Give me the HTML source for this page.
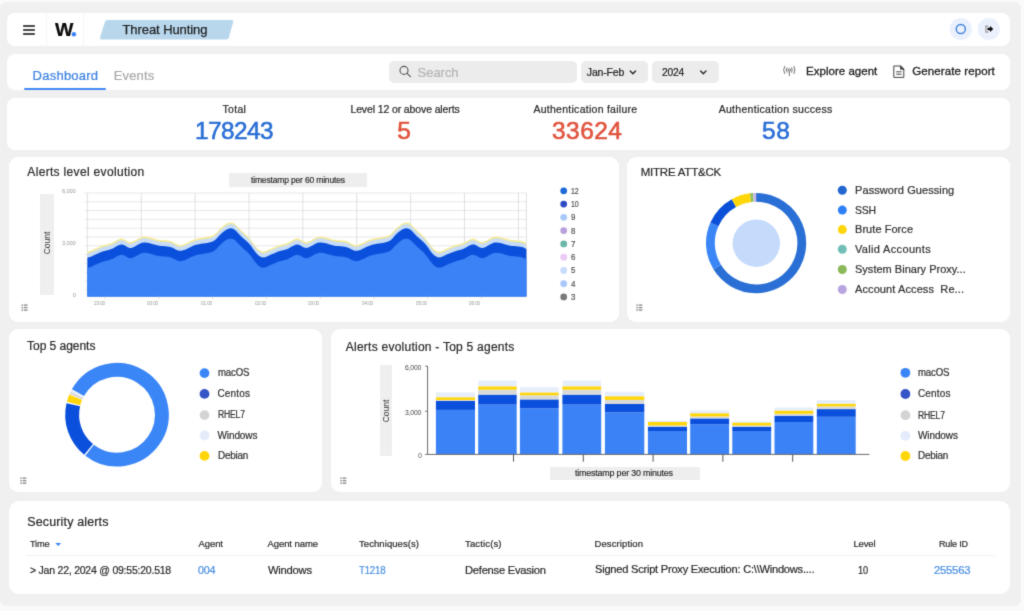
<!DOCTYPE html>
<html><head><meta charset="utf-8"><title>Threat Hunting</title>
<style>
html,body{margin:0;padding:0;}
body{width:1024px;height:611px;overflow:hidden;background:#fafafa;font-family:"Liberation Sans",sans-serif;position:relative;}
.t{position:absolute;white-space:nowrap;margin:0;padding:0;}
.b{position:absolute;}
svg{position:absolute;left:0;top:0;overflow:visible;}
#wrap{position:absolute;left:-12px;top:-12px;width:1048px;height:635px;background:#fafafa;filter:url(#soft);}
#page{position:absolute;left:12px;top:12px;width:1024px;height:611px;}
</style></head><body><svg width="0" height="0" style="position:absolute"><defs><filter id="soft" x="0" y="0" width="100%" height="100%" color-interpolation-filters="sRGB"><feConvolveMatrix order="3" kernelMatrix="0.0169 0.0962 0.0169 0.0962 0.5476 0.0962 0.0169 0.0962 0.0169" divisor="1" edgeMode="duplicate" preserveAlpha="true"/></filter></defs></svg><div id="wrap"><div id="page">
<div class="b" style="left:-0.50px;top:2.00px;width:1021.10px;height:603.80px;background:#f0f0f0;border-radius:6px;"></div>
<div class="b" style="left:6.80px;top:13.00px;width:1003.40px;height:33.20px;background:#fff;border-radius:8px;"></div>
<div class="b" style="left:6.80px;top:54.00px;width:1003.40px;height:35.80px;background:#fff;border-radius:8px;"></div>
<div class="b" style="left:6.80px;top:98.00px;width:1003.40px;height:51.60px;background:#fff;border-radius:8px;"></div>
<div class="b" style="left:8.50px;top:157.00px;width:610.10px;height:164.50px;background:#fff;border-radius:9px;"></div>
<div class="b" style="left:627.20px;top:157.00px;width:383.20px;height:164.50px;background:#fff;border-radius:9px;"></div>
<div class="b" style="left:8.50px;top:329.00px;width:313.90px;height:163.10px;background:#fff;border-radius:9px;"></div>
<div class="b" style="left:331.00px;top:329.00px;width:679.40px;height:163.10px;background:#fff;border-radius:9px;"></div>
<div class="b" style="left:8.50px;top:500.80px;width:1001.70px;height:93.50px;background:#fff;border-radius:10px;"></div>
<div class="b" style="left:22.60px;top:25.00px;width:12.30px;height:1.70px;background:#484848;border-radius:0.8px;"></div>
<div class="b" style="left:22.60px;top:29.00px;width:12.30px;height:1.70px;background:#484848;border-radius:0.8px;"></div>
<div class="b" style="left:22.60px;top:33.00px;width:12.30px;height:1.70px;background:#484848;border-radius:0.8px;"></div>
<div class="b" style="left:46.10px;top:13.00px;width:0.80px;height:33.20px;background:#f6f6f6;border-radius:0px;"></div>
<div class="b" style="left:83.00px;top:13.00px;width:0.80px;height:33.20px;background:#f6f6f6;border-radius:0px;"></div>
<div class="t" style="left:54.50px;top:21.29px;font-size:18.8px;line-height:18.8px;color:#0a0a0a;transform:scaleX(1.0370);transform-origin:0 0;font-weight:bold;-webkit-text-stroke:0.22px #0a0a0a;">W</div>
<svg width="1024" height="611" viewBox="0 0 1024 611"><circle cx="73.9" cy="34.3" r="2.2" fill="#3b82f6"/><path d="M107.6 20 L231.6 20 Q233.8 20 233.2 22 L228.8 37.7 Q228.3 39.5 226.3 39.5 L101.6 39.5 Q99.5 39.5 100.1 37.5 L104.9 21.8 Q105.5 20 107.6 20 Z" fill="#b8d7ed"/><circle cx="960.8" cy="29.0" r="11.1" fill="#eaf1fd"/><circle cx="960.8" cy="29.05" r="4.55" fill="none" stroke="#3f80de" stroke-width="1.4"/><circle cx="988.8" cy="29.0" r="11.1" fill="#eaf1fd"/><path d="M985.3 25.5 h3.0 v1.3 h-1.8 v4.6 h1.8 v1.3 h-3.0 Z" fill="#9a9a9a"/><path d="M987.5 27.7 h2.5 v-1.7 l3.3 3.0 l-3.3 3.0 v-1.7 h-2.5 Z" fill="#0a0a0a"/></svg>
<div class="t" style="left:122.50px;top:22.75px;font-size:13px;line-height:13px;color:#1f1f1f;letter-spacing:-0.076px;-webkit-text-stroke:0.25px #1f1f1f;">Threat Hunting</div>
<div class="t" style="left:32.60px;top:68.80px;font-size:13px;line-height:13px;color:#3d82e0;letter-spacing:0.238px;-webkit-text-stroke:0.22px #3d82e0;">Dashboard</div>
<div class="b" style="left:23.70px;top:88.00px;width:82.30px;height:2.30px;background:#4287f2;border-radius:1px;"></div>
<div class="t" style="left:113.75px;top:68.75px;font-size:13px;line-height:13px;color:#aaaaaa;letter-spacing:0.151px;-webkit-text-stroke:0.22px #aaaaaa;">Events</div>
<div class="b" style="left:389.20px;top:61.00px;width:188.00px;height:21.70px;background:#ececec;border-radius:5px;"></div>
<svg width="1024" height="611" viewBox="0 0 1024 611"><circle cx="404.0" cy="70.4" r="4.0" fill="none" stroke="#555" stroke-width="1.1"/><path d="M407.0 73.4 L410.5 76.6" stroke="#555" stroke-width="1.2" stroke-linecap="round"/></svg>
<div class="t" style="left:417.60px;top:66.00px;font-size:13px;line-height:13px;color:#b4b4b4;letter-spacing:-0.038px;-webkit-text-stroke:0.22px #b4b4b4;">Search</div>
<div class="b" style="left:581.00px;top:61.00px;width:67.30px;height:21.70px;background:#ececec;border-radius:5px;"></div>
<div class="t" style="left:586.80px;top:66.81px;font-size:10.5px;line-height:10.5px;color:#222;letter-spacing:-0.153px;-webkit-text-stroke:0.2px #222;">Jan-Feb</div>
<div class="b" style="left:651.70px;top:61.00px;width:67.30px;height:21.70px;background:#ececec;border-radius:5px;"></div>
<div class="t" style="left:662.00px;top:66.81px;font-size:10.5px;line-height:10.5px;color:#222;letter-spacing:-0.231px;transform:scaleX(0.9794);transform-origin:0 0;-webkit-text-stroke:0.2px #222;">2024</div>
<svg width="1024" height="611" viewBox="0 0 1024 611"><path d="M630.2 71.0 L632.9 73.7 L635.6 71.0" fill="none" stroke="#222" stroke-width="1.3" stroke-linecap="round" stroke-linejoin="round"/><path d="M700.6 71.0 L703.3 73.7 L706 71.0" fill="none" stroke="#222" stroke-width="1.3" stroke-linecap="round" stroke-linejoin="round"/><g fill="none" stroke="#707070" stroke-width="1.0" stroke-linecap="round"><circle cx="789.3" cy="70" r="1.2"/><path d="M789.3 71.4 V75.6"/><path d="M786.9 67.8 Q785.7 70 786.9 72.2"/><path d="M791.7 67.8 Q792.9 70 791.7 72.2"/><path d="M784.6 66.4 Q782.6 70 784.6 73.6"/><path d="M794 66.4 Q796 70 794 73.6"/></g><g fill="none" stroke="#444" stroke-width="1" stroke-linejoin="round" stroke-linecap="round"><path d="M894.2 66 H900.8 L903.8 69 V77.4 H894.2 Z"/><path d="M900.6 66.2 V69.2 H903.6 Z" fill="#444"/><path d="M896.6 71.8 H901.2 M896.6 74.2 H901.2"/></g></svg>
<div class="t" style="left:806.00px;top:65.67px;font-size:11.5px;line-height:11.5px;color:#222;letter-spacing:0.028px;-webkit-text-stroke:0.3px #222;">Explore agent</div>
<div class="t" style="left:912.30px;top:65.67px;font-size:11.5px;line-height:11.5px;color:#222;letter-spacing:0.094px;-webkit-text-stroke:0.3px #222;">Generate report</div>
<div class="t" style="left:222.50px;top:104.31px;font-size:10.5px;line-height:10.5px;color:#2b2b2b;letter-spacing:0.305px;-webkit-text-stroke:0.22px #2b2b2b;">Total</div>
<div class="t" style="left:195.25px;top:119.26px;font-size:24.5px;line-height:24.5px;color:#2b6fd6;letter-spacing:-0.539px;transform:scaleX(0.9929);transform-origin:0 0;-webkit-text-stroke:0.6px #2b6fd6;">178243</div>
<div class="t" style="left:350.45px;top:104.31px;font-size:10.5px;line-height:10.5px;color:#2b2b2b;letter-spacing:-0.121px;-webkit-text-stroke:0.22px #2b2b2b;">Level 12 or above alerts</div>
<div class="t" style="left:397.29px;top:119.26px;font-size:24.5px;line-height:24.5px;color:#e0543e;-webkit-text-stroke:0.6px #e0543e;">5</div>
<div class="t" style="left:533.45px;top:104.31px;font-size:10.5px;line-height:10.5px;color:#2b2b2b;letter-spacing:0.268px;-webkit-text-stroke:0.22px #2b2b2b;">Authentication failure</div>
<div class="t" style="left:552.00px;top:119.26px;font-size:24.5px;line-height:24.5px;color:#e0543e;letter-spacing:0.467px;-webkit-text-stroke:0.6px #e0543e;">33624</div>
<div class="t" style="left:718.70px;top:104.31px;font-size:10.5px;line-height:10.5px;color:#2b2b2b;letter-spacing:0.295px;-webkit-text-stroke:0.22px #2b2b2b;">Authentication success</div>
<div class="t" style="left:762.00px;top:119.26px;font-size:24.5px;line-height:24.5px;color:#2b6fd6;letter-spacing:0.748px;-webkit-text-stroke:0.6px #2b6fd6;">58</div>
<div class="t" style="left:27.30px;top:166.04px;font-size:12px;line-height:12px;color:#2b2b2b;letter-spacing:0.330px;-webkit-text-stroke:0.22px #2b2b2b;">Alerts level evolution</div>
<div class="t" style="left:640.70px;top:166.97px;font-size:11.5px;line-height:11.5px;color:#2b2b2b;letter-spacing:-0.214px;-webkit-text-stroke:0.22px #2b2b2b;">MITRE ATT&amp;CK</div>
<div class="t" style="left:27.10px;top:339.74px;font-size:12px;line-height:12px;color:#2b2b2b;letter-spacing:-0.038px;-webkit-text-stroke:0.22px #2b2b2b;">Top 5 agents</div>
<div class="t" style="left:345.80px;top:341.24px;font-size:12px;line-height:12px;color:#2b2b2b;letter-spacing:0.243px;-webkit-text-stroke:0.22px #2b2b2b;">Alerts evolution - Top 5 agents</div>
<div class="t" style="left:27.25px;top:515.52px;font-size:12.5px;line-height:12.5px;color:#2b2b2b;letter-spacing:0.143px;-webkit-text-stroke:0.22px #2b2b2b;">Security alerts</div>
<svg width="1024" height="611" viewBox="0 0 1024 611"><g fill="#8f8f8f"><rect x="21.50" y="304.40" width="1.5" height="1.4"/><rect x="23.80" y="304.40" width="3.7" height="1.4"/><rect x="21.50" y="306.90" width="1.5" height="1.4"/><rect x="23.80" y="306.90" width="3.7" height="1.4"/><rect x="21.50" y="309.40" width="1.5" height="1.4"/><rect x="23.80" y="309.40" width="3.7" height="1.4"/></g></svg>
<svg width="1024" height="611" viewBox="0 0 1024 611"><g fill="#8f8f8f"><rect x="636.30" y="304.40" width="1.5" height="1.4"/><rect x="638.60" y="304.40" width="3.7" height="1.4"/><rect x="636.30" y="306.90" width="1.5" height="1.4"/><rect x="638.60" y="306.90" width="3.7" height="1.4"/><rect x="636.30" y="309.40" width="1.5" height="1.4"/><rect x="638.60" y="309.40" width="3.7" height="1.4"/></g></svg>
<svg width="1024" height="611" viewBox="0 0 1024 611"><g fill="#8f8f8f"><rect x="20.30" y="477.50" width="1.5" height="1.4"/><rect x="22.60" y="477.50" width="3.7" height="1.4"/><rect x="20.30" y="480.00" width="1.5" height="1.4"/><rect x="22.60" y="480.00" width="3.7" height="1.4"/><rect x="20.30" y="482.50" width="1.5" height="1.4"/><rect x="22.60" y="482.50" width="3.7" height="1.4"/></g></svg>
<svg width="1024" height="611" viewBox="0 0 1024 611"><g fill="#8f8f8f"><rect x="340.30" y="477.50" width="1.5" height="1.4"/><rect x="342.60" y="477.50" width="3.7" height="1.4"/><rect x="340.30" y="480.00" width="1.5" height="1.4"/><rect x="342.60" y="480.00" width="3.7" height="1.4"/><rect x="340.30" y="482.50" width="1.5" height="1.4"/><rect x="342.60" y="482.50" width="3.7" height="1.4"/></g></svg>
<div class="b" style="left:40.20px;top:193.50px;width:13.80px;height:101.30px;background:#efefef;border-radius:0px;"></div>
<svg width="1024" height="611" viewBox="0 0 1024 611"><path d="M84.40 193.00 H526.40" stroke="#e9e4e4" stroke-width="0.9"/><path d="M84.40 201.80 H526.40" stroke="#e9e4e4" stroke-width="0.9"/><path d="M84.40 210.60 H526.40" stroke="#e9e4e4" stroke-width="0.9"/><path d="M84.40 219.40 H526.40" stroke="#e9e4e4" stroke-width="0.9"/><path d="M84.40 228.20 H526.40" stroke="#e9e4e4" stroke-width="0.9"/><path d="M84.40 237.00 H526.40" stroke="#e9e4e4" stroke-width="0.9"/><path d="M84.40 245.80 H526.40" stroke="#e9e4e4" stroke-width="0.9"/><path d="M84.40 254.60 H526.40" stroke="#e9e4e4" stroke-width="0.9"/><path d="M84.40 263.40 H526.40" stroke="#e9e4e4" stroke-width="0.9"/><path d="M84.40 272.20 H526.40" stroke="#e9e4e4" stroke-width="0.9"/><path d="M84.40 281.00 H526.40" stroke="#e9e4e4" stroke-width="0.9"/><path d="M84.40 289.80 H526.40" stroke="#e9e4e4" stroke-width="0.9"/><path d="M87.40 193.00 V296.60" stroke="#dbd9d9" stroke-width="0.8"/><path d="M141.27 193.00 V296.60" stroke="#dbd9d9" stroke-width="0.8"/><path d="M195.14 193.00 V296.60" stroke="#dbd9d9" stroke-width="0.8"/><path d="M249.01 193.00 V296.60" stroke="#dbd9d9" stroke-width="0.8"/><path d="M302.88 193.00 V296.60" stroke="#dbd9d9" stroke-width="0.8"/><path d="M356.75 193.00 V296.60" stroke="#dbd9d9" stroke-width="0.8"/><path d="M410.62 193.00 V296.60" stroke="#dbd9d9" stroke-width="0.8"/><path d="M464.49 193.00 V296.60" stroke="#dbd9d9" stroke-width="0.8"/><path d="M518.36 193.00 V296.60" stroke="#dbd9d9" stroke-width="0.8"/><path d="M526.40 193.00 V296.60" stroke="#dbd9d9" stroke-width="0.8"/><path d="M87.4 251.60 L89.4 251.30 L91.4 250.50 L93.4 249.49 L95.4 248.55 L97.4 247.73 L99.4 246.90 L101.4 246.08 L103.4 245.35 L105.4 244.75 L107.4 244.27 L109.4 243.78 L111.3 243.16 L113.3 242.24 L115.3 241.09 L117.3 239.92 L119.3 238.99 L121.3 238.51 L123.3 238.85 L125.3 239.91 L127.3 241.14 L129.3 242.00 L131.3 241.98 L133.3 241.34 L135.3 240.34 L137.3 239.18 L139.3 238.05 L141.3 237.13 L143.3 236.62 L145.3 236.57 L147.3 236.79 L149.3 237.21 L151.3 237.75 L153.2 238.35 L155.2 238.95 L157.2 239.45 L159.2 239.81 L161.2 240.04 L163.2 240.20 L165.2 240.34 L167.2 240.53 L169.2 240.83 L171.2 241.31 L173.2 242.19 L175.2 243.29 L177.2 244.30 L179.2 244.93 L181.2 244.92 L183.2 244.47 L185.2 243.76 L187.2 242.86 L189.2 241.87 L191.2 240.87 L193.2 239.96 L195.2 239.21 L197.2 238.66 L199.1 238.25 L201.1 237.93 L203.1 237.64 L205.1 237.36 L207.1 237.04 L209.1 236.62 L211.1 236.08 L213.1 235.36 L215.1 234.12 L217.1 232.04 L219.1 229.73 L221.1 227.76 L223.1 226.03 L225.1 224.50 L227.1 223.31 L229.1 222.63 L231.1 222.46 L233.1 222.80 L235.1 224.14 L237.1 226.16 L239.1 228.34 L241.1 230.28 L243.0 232.05 L245.0 233.79 L247.0 235.60 L249.0 237.59 L251.0 239.96 L253.0 242.74 L255.0 245.55 L257.0 248.00 L259.0 249.83 L261.0 251.06 L263.0 251.59 L265.0 251.35 L267.0 250.59 L269.0 249.59 L271.0 248.63 L273.0 247.82 L275.0 246.98 L277.0 246.16 L279.0 245.42 L281.0 244.81 L283.0 244.32 L285.0 243.84 L286.9 243.23 L288.9 242.35 L290.9 241.21 L292.9 240.03 L294.9 239.06 L296.9 238.53 L298.9 238.77 L300.9 239.78 L302.9 241.02 L304.9 241.94 L306.9 242.02 L308.9 241.42 L310.9 240.45 L312.9 239.30 L314.9 238.15 L316.9 237.21 L318.9 236.65 L320.9 236.56 L322.9 236.76 L324.9 237.16 L326.9 237.69 L328.9 238.29 L330.8 238.89 L332.8 239.41 L334.8 239.78 L336.8 240.02 L338.8 240.18 L340.8 240.33 L342.8 240.51 L344.8 240.79 L346.8 241.24 L348.8 242.09 L350.8 243.18 L352.8 244.21 L354.8 244.89 L356.8 244.95 L358.8 244.53 L360.8 243.84 L362.8 242.96 L364.8 241.97 L366.8 240.97 L368.8 240.04 L370.8 239.27 L372.8 238.71 L374.7 238.29 L376.7 237.96 L378.7 237.67 L380.7 237.39 L382.7 237.07 L384.7 236.67 L386.7 236.14 L388.7 235.44 L390.7 234.29 L392.7 232.27 L394.7 229.96 L396.7 227.94 L398.7 226.20 L400.7 224.64 L402.7 223.41 L404.7 222.67 L406.7 222.46 L408.7 222.73 L410.7 223.97 L412.7 225.94 L414.7 228.13 L416.6 230.10 L418.6 231.87 L420.6 233.61 L422.6 235.41 L424.6 237.38 L426.6 239.70 L428.6 242.45 L430.6 245.27 L432.6 247.78 L434.6 249.67 L436.6 250.97 L438.6 251.57 L440.6 251.41 L442.6 250.68 L444.6 249.69 L446.6 248.72 L448.6 247.90 L450.6 247.06 L452.6 246.24 L454.6 245.49 L456.6 244.86 L458.6 244.37 L460.5 243.89 L462.5 243.30 L464.5 242.45 L466.5 241.33 L468.5 240.15 L470.5 239.15 L472.5 238.56 L474.5 238.70 L476.5 239.66 L478.5 240.90 L480.5 241.88 L482.5 242.05 L484.5 241.50 L486.5 240.56 L488.5 239.42 L490.5 238.26 L492.5 237.29 L494.5 236.68 L496.5 236.56 L498.5 236.73 L500.5 237.11 L502.5 237.63 L504.5 238.23 L506.4 238.83 L508.4 239.36 L510.4 239.75 L512.4 240.00 L514.4 240.17 L516.4 240.31 L518.4 240.49 L520.4 240.76 L522.4 241.18 L524.4 241.99 L526.4 243.06 L526.4 296.60 L87.4 296.60 Z" fill="#f4ea95"/><path d="M87.4 253.30 L89.4 253.00 L91.4 252.20 L93.4 251.19 L95.4 250.25 L97.4 249.43 L99.4 248.60 L101.4 247.78 L103.4 247.05 L105.4 246.45 L107.4 245.97 L109.4 245.48 L111.3 244.86 L113.3 243.94 L115.3 242.79 L117.3 241.62 L119.3 240.69 L121.3 240.21 L123.3 240.55 L125.3 241.61 L127.3 242.84 L129.3 243.70 L131.3 243.68 L133.3 243.04 L135.3 242.04 L137.3 240.88 L139.3 239.75 L141.3 238.83 L143.3 238.32 L145.3 238.27 L147.3 238.49 L149.3 238.91 L151.3 239.45 L153.2 240.05 L155.2 240.65 L157.2 241.15 L159.2 241.51 L161.2 241.74 L163.2 241.90 L165.2 242.04 L167.2 242.23 L169.2 242.53 L171.2 243.01 L173.2 243.89 L175.2 244.99 L177.2 246.00 L179.2 246.63 L181.2 246.62 L183.2 246.17 L185.2 245.46 L187.2 244.56 L189.2 243.57 L191.2 242.57 L193.2 241.66 L195.2 240.91 L197.2 240.36 L199.1 239.95 L201.1 239.63 L203.1 239.34 L205.1 239.06 L207.1 238.74 L209.1 238.32 L211.1 237.78 L213.1 237.06 L215.1 235.82 L217.1 233.74 L219.1 231.43 L221.1 229.46 L223.1 227.73 L225.1 226.20 L227.1 225.01 L229.1 224.33 L231.1 224.16 L233.1 224.50 L235.1 225.84 L237.1 227.86 L239.1 230.04 L241.1 231.98 L243.0 233.75 L245.0 235.49 L247.0 237.30 L249.0 239.29 L251.0 241.66 L253.0 244.44 L255.0 247.25 L257.0 249.70 L259.0 251.53 L261.0 252.76 L263.0 253.29 L265.0 253.05 L267.0 252.29 L269.0 251.29 L271.0 250.33 L273.0 249.52 L275.0 248.68 L277.0 247.86 L279.0 247.12 L281.0 246.51 L283.0 246.02 L285.0 245.54 L286.9 244.93 L288.9 244.05 L290.9 242.91 L292.9 241.73 L294.9 240.76 L296.9 240.23 L298.9 240.47 L300.9 241.48 L302.9 242.72 L304.9 243.64 L306.9 243.72 L308.9 243.12 L310.9 242.15 L312.9 241.00 L314.9 239.85 L316.9 238.91 L318.9 238.35 L320.9 238.26 L322.9 238.46 L324.9 238.86 L326.9 239.39 L328.9 239.99 L330.8 240.59 L332.8 241.11 L334.8 241.48 L336.8 241.72 L338.8 241.88 L340.8 242.03 L342.8 242.21 L344.8 242.49 L346.8 242.94 L348.8 243.79 L350.8 244.88 L352.8 245.91 L354.8 246.59 L356.8 246.65 L358.8 246.23 L360.8 245.54 L362.8 244.66 L364.8 243.67 L366.8 242.67 L368.8 241.74 L370.8 240.97 L372.8 240.41 L374.7 239.99 L376.7 239.66 L378.7 239.37 L380.7 239.09 L382.7 238.77 L384.7 238.37 L386.7 237.84 L388.7 237.14 L390.7 235.99 L392.7 233.97 L394.7 231.66 L396.7 229.64 L398.7 227.90 L400.7 226.34 L402.7 225.11 L404.7 224.37 L406.7 224.16 L408.7 224.43 L410.7 225.67 L412.7 227.64 L414.7 229.83 L416.6 231.80 L418.6 233.57 L420.6 235.31 L422.6 237.11 L424.6 239.08 L426.6 241.40 L428.6 244.15 L430.6 246.97 L432.6 249.48 L434.6 251.37 L436.6 252.67 L438.6 253.27 L440.6 253.11 L442.6 252.38 L444.6 251.39 L446.6 250.42 L448.6 249.60 L450.6 248.76 L452.6 247.94 L454.6 247.19 L456.6 246.56 L458.6 246.07 L460.5 245.59 L462.5 245.00 L464.5 244.15 L466.5 243.03 L468.5 241.85 L470.5 240.85 L472.5 240.26 L474.5 240.40 L476.5 241.36 L478.5 242.60 L480.5 243.58 L482.5 243.75 L484.5 243.20 L486.5 242.26 L488.5 241.12 L490.5 239.96 L492.5 238.99 L494.5 238.38 L496.5 238.26 L498.5 238.43 L500.5 238.81 L502.5 239.33 L504.5 239.93 L506.4 240.53 L508.4 241.06 L510.4 241.45 L512.4 241.70 L514.4 241.87 L516.4 242.01 L518.4 242.19 L520.4 242.46 L522.4 242.88 L524.4 243.69 L526.4 244.76 L526.4 296.60 L87.4 296.60 Z" fill="#c7dcf6"/><path d="M87.4 257.50 L89.4 257.20 L91.4 256.40 L93.4 255.39 L95.4 254.45 L97.4 253.63 L99.4 252.80 L101.4 251.98 L103.4 251.25 L105.4 250.65 L107.4 250.17 L109.4 249.68 L111.3 249.06 L113.3 248.14 L115.3 246.99 L117.3 245.82 L119.3 244.89 L121.3 244.41 L123.3 244.75 L125.3 245.81 L127.3 247.04 L129.3 247.90 L131.3 247.88 L133.3 247.24 L135.3 246.24 L137.3 245.08 L139.3 243.95 L141.3 243.03 L143.3 242.52 L145.3 242.47 L147.3 242.69 L149.3 243.11 L151.3 243.65 L153.2 244.25 L155.2 244.85 L157.2 245.35 L159.2 245.71 L161.2 245.94 L163.2 246.10 L165.2 246.24 L167.2 246.43 L169.2 246.73 L171.2 247.21 L173.2 248.09 L175.2 249.19 L177.2 250.20 L179.2 250.83 L181.2 250.82 L183.2 250.37 L185.2 249.66 L187.2 248.76 L189.2 247.77 L191.2 246.77 L193.2 245.86 L195.2 245.11 L197.2 244.56 L199.1 244.15 L201.1 243.83 L203.1 243.54 L205.1 243.26 L207.1 242.94 L209.1 242.52 L211.1 241.98 L213.1 241.26 L215.1 240.02 L217.1 237.94 L219.1 235.63 L221.1 233.66 L223.1 231.93 L225.1 230.40 L227.1 229.21 L229.1 228.53 L231.1 228.36 L233.1 228.70 L235.1 230.04 L237.1 232.06 L239.1 234.24 L241.1 236.18 L243.0 237.95 L245.0 239.69 L247.0 241.50 L249.0 243.49 L251.0 245.86 L253.0 248.64 L255.0 251.45 L257.0 253.90 L259.0 255.73 L261.0 256.96 L263.0 257.49 L265.0 257.25 L267.0 256.49 L269.0 255.49 L271.0 254.53 L273.0 253.72 L275.0 252.88 L277.0 252.06 L279.0 251.32 L281.0 250.71 L283.0 250.22 L285.0 249.74 L286.9 249.13 L288.9 248.25 L290.9 247.11 L292.9 245.93 L294.9 244.96 L296.9 244.43 L298.9 244.67 L300.9 245.68 L302.9 246.92 L304.9 247.84 L306.9 247.92 L308.9 247.32 L310.9 246.35 L312.9 245.20 L314.9 244.05 L316.9 243.11 L318.9 242.55 L320.9 242.46 L322.9 242.66 L324.9 243.06 L326.9 243.59 L328.9 244.19 L330.8 244.79 L332.8 245.31 L334.8 245.68 L336.8 245.92 L338.8 246.08 L340.8 246.23 L342.8 246.41 L344.8 246.69 L346.8 247.14 L348.8 247.99 L350.8 249.08 L352.8 250.11 L354.8 250.79 L356.8 250.85 L358.8 250.43 L360.8 249.74 L362.8 248.86 L364.8 247.87 L366.8 246.87 L368.8 245.94 L370.8 245.17 L372.8 244.61 L374.7 244.19 L376.7 243.86 L378.7 243.57 L380.7 243.29 L382.7 242.97 L384.7 242.57 L386.7 242.04 L388.7 241.34 L390.7 240.19 L392.7 238.17 L394.7 235.86 L396.7 233.84 L398.7 232.10 L400.7 230.54 L402.7 229.31 L404.7 228.57 L406.7 228.36 L408.7 228.63 L410.7 229.87 L412.7 231.84 L414.7 234.03 L416.6 236.00 L418.6 237.77 L420.6 239.51 L422.6 241.31 L424.6 243.28 L426.6 245.60 L428.6 248.35 L430.6 251.17 L432.6 253.68 L434.6 255.57 L436.6 256.87 L438.6 257.47 L440.6 257.31 L442.6 256.58 L444.6 255.59 L446.6 254.62 L448.6 253.80 L450.6 252.96 L452.6 252.14 L454.6 251.39 L456.6 250.76 L458.6 250.27 L460.5 249.79 L462.5 249.20 L464.5 248.35 L466.5 247.23 L468.5 246.05 L470.5 245.05 L472.5 244.46 L474.5 244.60 L476.5 245.56 L478.5 246.80 L480.5 247.78 L482.5 247.95 L484.5 247.40 L486.5 246.46 L488.5 245.32 L490.5 244.16 L492.5 243.19 L494.5 242.58 L496.5 242.46 L498.5 242.63 L500.5 243.01 L502.5 243.53 L504.5 244.13 L506.4 244.73 L508.4 245.26 L510.4 245.65 L512.4 245.90 L514.4 246.07 L516.4 246.21 L518.4 246.39 L520.4 246.66 L522.4 247.08 L524.4 247.89 L526.4 248.96 L526.4 296.60 L87.4 296.60 Z" fill="#0a50dc"/><path d="M87.4 267.80 L89.4 267.50 L91.4 266.70 L93.4 265.69 L95.4 264.75 L97.4 263.93 L99.4 263.10 L101.4 262.28 L103.4 261.55 L105.4 260.95 L107.4 260.47 L109.4 259.98 L111.3 259.36 L113.3 258.44 L115.3 257.29 L117.3 256.12 L119.3 255.19 L121.3 254.71 L123.3 255.05 L125.3 256.11 L127.3 257.34 L129.3 258.20 L131.3 258.18 L133.3 257.54 L135.3 256.54 L137.3 255.38 L139.3 254.25 L141.3 253.33 L143.3 252.82 L145.3 252.77 L147.3 252.99 L149.3 253.41 L151.3 253.95 L153.2 254.55 L155.2 255.15 L157.2 255.65 L159.2 256.01 L161.2 256.24 L163.2 256.40 L165.2 256.54 L167.2 256.73 L169.2 257.03 L171.2 257.51 L173.2 258.39 L175.2 259.49 L177.2 260.50 L179.2 261.13 L181.2 261.12 L183.2 260.67 L185.2 259.96 L187.2 259.06 L189.2 258.07 L191.2 257.07 L193.2 256.16 L195.2 255.41 L197.2 254.86 L199.1 254.45 L201.1 254.13 L203.1 253.84 L205.1 253.56 L207.1 253.24 L209.1 252.82 L211.1 252.28 L213.1 251.56 L215.1 250.32 L217.1 248.24 L219.1 245.93 L221.1 243.96 L223.1 242.23 L225.1 240.70 L227.1 239.51 L229.1 238.83 L231.1 238.66 L233.1 239.00 L235.1 240.34 L237.1 242.36 L239.1 244.54 L241.1 246.48 L243.0 248.25 L245.0 249.99 L247.0 251.80 L249.0 253.79 L251.0 256.16 L253.0 258.94 L255.0 261.75 L257.0 264.20 L259.0 266.03 L261.0 267.26 L263.0 267.79 L265.0 267.55 L267.0 266.79 L269.0 265.79 L271.0 264.83 L273.0 264.02 L275.0 263.18 L277.0 262.36 L279.0 261.62 L281.0 261.01 L283.0 260.52 L285.0 260.04 L286.9 259.43 L288.9 258.55 L290.9 257.41 L292.9 256.23 L294.9 255.26 L296.9 254.73 L298.9 254.97 L300.9 255.98 L302.9 257.22 L304.9 258.14 L306.9 258.22 L308.9 257.62 L310.9 256.65 L312.9 255.50 L314.9 254.35 L316.9 253.41 L318.9 252.85 L320.9 252.76 L322.9 252.96 L324.9 253.36 L326.9 253.89 L328.9 254.49 L330.8 255.09 L332.8 255.61 L334.8 255.98 L336.8 256.22 L338.8 256.38 L340.8 256.53 L342.8 256.71 L344.8 256.99 L346.8 257.44 L348.8 258.29 L350.8 259.38 L352.8 260.41 L354.8 261.09 L356.8 261.15 L358.8 260.73 L360.8 260.04 L362.8 259.16 L364.8 258.17 L366.8 257.17 L368.8 256.24 L370.8 255.47 L372.8 254.91 L374.7 254.49 L376.7 254.16 L378.7 253.87 L380.7 253.59 L382.7 253.27 L384.7 252.87 L386.7 252.34 L388.7 251.64 L390.7 250.49 L392.7 248.47 L394.7 246.16 L396.7 244.14 L398.7 242.40 L400.7 240.84 L402.7 239.61 L404.7 238.87 L406.7 238.66 L408.7 238.93 L410.7 240.17 L412.7 242.14 L414.7 244.33 L416.6 246.30 L418.6 248.07 L420.6 249.81 L422.6 251.61 L424.6 253.58 L426.6 255.90 L428.6 258.65 L430.6 261.47 L432.6 263.98 L434.6 265.87 L436.6 267.17 L438.6 267.77 L440.6 267.61 L442.6 266.88 L444.6 265.89 L446.6 264.92 L448.6 264.10 L450.6 263.26 L452.6 262.44 L454.6 261.69 L456.6 261.06 L458.6 260.57 L460.5 260.09 L462.5 259.50 L464.5 258.65 L466.5 257.53 L468.5 256.35 L470.5 255.35 L472.5 254.76 L474.5 254.90 L476.5 255.86 L478.5 257.10 L480.5 258.08 L482.5 258.25 L484.5 257.70 L486.5 256.76 L488.5 255.62 L490.5 254.46 L492.5 253.49 L494.5 252.88 L496.5 252.76 L498.5 252.93 L500.5 253.31 L502.5 253.83 L504.5 254.43 L506.4 255.03 L508.4 255.56 L510.4 255.95 L512.4 256.20 L514.4 256.37 L516.4 256.51 L518.4 256.69 L520.4 256.96 L522.4 257.38 L524.4 258.19 L526.4 259.26 L526.4 296.60 L87.4 296.60 Z" fill="#3b82f6"/><path d="M105.10 296.60 V298.80" stroke="#ccc" stroke-width="0.8"/><path d="M158.87 296.60 V298.80" stroke="#ccc" stroke-width="0.8"/><path d="M212.64 296.60 V298.80" stroke="#ccc" stroke-width="0.8"/><path d="M266.41 296.60 V298.80" stroke="#ccc" stroke-width="0.8"/><path d="M320.18 296.60 V298.80" stroke="#ccc" stroke-width="0.8"/><path d="M373.95 296.60 V298.80" stroke="#ccc" stroke-width="0.8"/><path d="M427.72 296.60 V298.80" stroke="#ccc" stroke-width="0.8"/><path d="M481.49 296.60 V298.80" stroke="#ccc" stroke-width="0.8"/></svg>
<div class="t" style="left:93.70px;top:300.99px;font-size:5.8px;line-height:5.8px;color:#9a9a9a;letter-spacing:-0.128px;transform:scaleX(0.7998);transform-origin:0 0;">23:00</div>
<div class="t" style="left:147.37px;top:300.99px;font-size:5.8px;line-height:5.8px;color:#9a9a9a;letter-spacing:-0.128px;transform:scaleX(0.7998);transform-origin:0 0;">00:00</div>
<div class="t" style="left:201.04px;top:300.99px;font-size:5.8px;line-height:5.8px;color:#9a9a9a;letter-spacing:-0.128px;transform:scaleX(0.7998);transform-origin:0 0;">01:00</div>
<div class="t" style="left:254.71px;top:300.99px;font-size:5.8px;line-height:5.8px;color:#9a9a9a;letter-spacing:-0.128px;transform:scaleX(0.7998);transform-origin:0 0;">02:00</div>
<div class="t" style="left:308.38px;top:300.99px;font-size:5.8px;line-height:5.8px;color:#9a9a9a;letter-spacing:-0.128px;transform:scaleX(0.7998);transform-origin:0 0;">03:00</div>
<div class="t" style="left:362.05px;top:300.99px;font-size:5.8px;line-height:5.8px;color:#9a9a9a;letter-spacing:-0.128px;transform:scaleX(0.7998);transform-origin:0 0;">04:00</div>
<div class="t" style="left:415.72px;top:300.99px;font-size:5.8px;line-height:5.8px;color:#9a9a9a;letter-spacing:-0.128px;transform:scaleX(0.7998);transform-origin:0 0;">05:00</div>
<div class="t" style="left:469.39px;top:300.99px;font-size:5.8px;line-height:5.8px;color:#9a9a9a;letter-spacing:-0.128px;transform:scaleX(0.7998);transform-origin:0 0;">06:00</div>
<div class="t" style="left:62.10px;top:189.09px;font-size:5.8px;line-height:5.8px;color:#9a9a9a;letter-spacing:-0.128px;transform:scaleX(0.9854);transform-origin:0 0;">6,000</div>
<div class="t" style="left:62.10px;top:241.09px;font-size:5.8px;line-height:5.8px;color:#9a9a9a;letter-spacing:-0.128px;transform:scaleX(0.9854);transform-origin:0 0;">3,000</div>
<div class="t" style="left:72.69px;top:293.39px;font-size:5.8px;line-height:5.8px;color:#9a9a9a;">0</div>
<div class="t" style="left:47.1px;top:243.2px;font-size:8.5px;line-height:8.5px;color:#333;transform:translate(-50%,-50%) rotate(-90deg);">Count</div>
<div class="b" style="left:229.10px;top:173.10px;width:137.80px;height:14.20px;background:#eeeeee;border-radius:0px;"></div>
<div class="t" style="left:250.50px;top:175.78px;font-size:9px;line-height:9px;color:#333;letter-spacing:-0.198px;transform:scaleX(0.9496);transform-origin:0 0;-webkit-text-stroke:0.22px #333;">timestamp per 60 minutes</div>
<div class="t" style="left:570.70px;top:186.78px;font-size:9px;line-height:9px;color:#555;letter-spacing:-0.198px;transform:scaleX(0.7847);transform-origin:0 0;-webkit-text-stroke:0.22px #555;">12</div>
<div class="t" style="left:570.70px;top:200.05px;font-size:9px;line-height:9px;color:#555;letter-spacing:-0.198px;transform:scaleX(0.7847);transform-origin:0 0;-webkit-text-stroke:0.22px #555;">10</div>
<div class="t" style="left:570.70px;top:213.32px;font-size:9px;line-height:9px;color:#555;transform:scaleX(0.8790);transform-origin:0 0;-webkit-text-stroke:0.22px #555;">9</div>
<div class="t" style="left:570.70px;top:226.59px;font-size:9px;line-height:9px;color:#555;transform:scaleX(0.8790);transform-origin:0 0;-webkit-text-stroke:0.22px #555;">8</div>
<div class="t" style="left:570.70px;top:239.86px;font-size:9px;line-height:9px;color:#555;transform:scaleX(0.8790);transform-origin:0 0;-webkit-text-stroke:0.22px #555;">7</div>
<div class="t" style="left:570.70px;top:253.13px;font-size:9px;line-height:9px;color:#555;transform:scaleX(0.8790);transform-origin:0 0;-webkit-text-stroke:0.22px #555;">6</div>
<div class="t" style="left:570.70px;top:266.40px;font-size:9px;line-height:9px;color:#555;transform:scaleX(0.8790);transform-origin:0 0;-webkit-text-stroke:0.22px #555;">5</div>
<div class="t" style="left:570.70px;top:279.67px;font-size:9px;line-height:9px;color:#555;transform:scaleX(0.8790);transform-origin:0 0;-webkit-text-stroke:0.22px #555;">4</div>
<div class="t" style="left:570.70px;top:292.94px;font-size:9px;line-height:9px;color:#555;transform:scaleX(0.8790);transform-origin:0 0;-webkit-text-stroke:0.22px #555;">3</div>
<svg width="1024" height="611" viewBox="0 0 1024 611"><circle cx="563.7" cy="190.80" r="3.4" fill="#1f6ad6"/><circle cx="563.7" cy="204.07" r="3.4" fill="#2c4cc4"/><circle cx="563.7" cy="217.34" r="3.4" fill="#a9c9fb"/><circle cx="563.7" cy="230.61" r="3.4" fill="#b7a0dc"/><circle cx="563.7" cy="243.88" r="3.4" fill="#6bb5a9"/><circle cx="563.7" cy="257.15" r="3.4" fill="#ecc9f6"/><circle cx="563.7" cy="270.42" r="3.4" fill="#c6dcfb"/><circle cx="563.7" cy="283.69" r="3.4" fill="#a9c9fb"/><circle cx="563.7" cy="296.96" r="3.4" fill="#7a7a7a"/></svg>
<div class="t" style="left:855.00px;top:184.89px;font-size:11px;line-height:11px;color:#333;letter-spacing:0.086px;-webkit-text-stroke:0.22px #333;white-space:pre;">Password Guessing</div>
<div class="t" style="left:855.00px;top:204.69px;font-size:11px;line-height:11px;color:#333;letter-spacing:-0.242px;transform:scaleX(0.9487);transform-origin:0 0;-webkit-text-stroke:0.22px #333;white-space:pre;">SSH</div>
<div class="t" style="left:855.00px;top:224.19px;font-size:11px;line-height:11px;color:#333;letter-spacing:0.053px;-webkit-text-stroke:0.22px #333;white-space:pre;">Brute Force</div>
<div class="t" style="left:855.00px;top:243.79px;font-size:11px;line-height:11px;color:#333;letter-spacing:0.335px;-webkit-text-stroke:0.22px #333;white-space:pre;">Valid Accounts</div>
<div class="t" style="left:855.00px;top:264.09px;font-size:11px;line-height:11px;color:#333;letter-spacing:0.013px;-webkit-text-stroke:0.22px #333;white-space:pre;">System Binary Proxy...</div>
<div class="t" style="left:855.00px;top:284.09px;font-size:11px;line-height:11px;color:#333;letter-spacing:0.100px;-webkit-text-stroke:0.22px #333;white-space:pre;">Account Access  Re...</div>
<svg width="1024" height="611" viewBox="0 0 1024 611"><path d="M756.10 197.40 A45.7 45.7 0 1 1 717.18 267.05" fill="none" stroke="#2a6fd5" stroke-width="8.8"/><path d="M717.18 267.05 A45.7 45.7 0 0 1 714.42 224.37" fill="none" stroke="#3b86f7" stroke-width="8.8"/><path d="M714.42 224.37 A45.7 45.7 0 0 1 733.94 203.13" fill="none" stroke="#0b50d8" stroke-width="8.8"/><path d="M733.94 203.13 A45.7 45.7 0 0 1 750.53 197.74" fill="none" stroke="#ffd60a" stroke-width="8.8"/><path d="M750.53 197.74 A45.7 45.7 0 0 1 753.39 197.48" fill="none" stroke="#8fbf5a" stroke-width="8.8"/><path d="M753.39 197.48 A45.7 45.7 0 0 1 756.10 197.40" fill="none" stroke="#c9b8ea" stroke-width="8.8"/><circle cx="756.3000000000001" cy="243.2" r="23.7" fill="#c4dbfc"/><circle cx="842.3" cy="190.30" r="4.5" fill="#2266d0"/><circle cx="842.3" cy="210.10" r="4.5" fill="#2f80f7"/><circle cx="842.3" cy="229.60" r="4.5" fill="#ffd60a"/><circle cx="842.3" cy="249.20" r="4.5" fill="#73bfb8"/><circle cx="842.3" cy="269.50" r="4.5" fill="#8ab85a"/><circle cx="842.3" cy="289.50" r="4.5" fill="#b8a4e0"/></svg>
<div class="t" style="left:217.50px;top:368.44px;font-size:10px;line-height:10px;color:#333;letter-spacing:-0.220px;transform:scaleX(0.9673);transform-origin:0 0;-webkit-text-stroke:0.22px #333;">macOS</div>
<div class="t" style="left:217.50px;top:389.24px;font-size:10px;line-height:10px;color:#333;letter-spacing:0.143px;-webkit-text-stroke:0.22px #333;">Centos</div>
<div class="t" style="left:217.50px;top:410.44px;font-size:10px;line-height:10px;color:#333;letter-spacing:-0.220px;transform:scaleX(0.8610);transform-origin:0 0;-webkit-text-stroke:0.22px #333;">RHEL7</div>
<div class="t" style="left:217.50px;top:430.84px;font-size:10px;line-height:10px;color:#333;letter-spacing:-0.111px;-webkit-text-stroke:0.22px #333;">Windows</div>
<div class="t" style="left:217.50px;top:451.24px;font-size:10px;line-height:10px;color:#333;letter-spacing:-0.220px;transform:scaleX(0.9938);transform-origin:0 0;-webkit-text-stroke:0.22px #333;">Debian</div>
<div class="t" style="left:918.00px;top:368.14px;font-size:10px;line-height:10px;color:#333;letter-spacing:-0.220px;transform:scaleX(0.9673);transform-origin:0 0;-webkit-text-stroke:0.22px #333;">macOS</div>
<div class="t" style="left:918.00px;top:389.34px;font-size:10px;line-height:10px;color:#333;letter-spacing:0.143px;-webkit-text-stroke:0.22px #333;">Centos</div>
<div class="t" style="left:918.00px;top:410.54px;font-size:10px;line-height:10px;color:#333;letter-spacing:-0.220px;transform:scaleX(0.8610);transform-origin:0 0;-webkit-text-stroke:0.22px #333;">RHEL7</div>
<div class="t" style="left:918.00px;top:431.14px;font-size:10px;line-height:10px;color:#333;letter-spacing:-0.111px;-webkit-text-stroke:0.22px #333;">Windows</div>
<div class="t" style="left:918.00px;top:451.34px;font-size:10px;line-height:10px;color:#333;letter-spacing:-0.220px;transform:scaleX(0.9938);transform-origin:0 0;-webkit-text-stroke:0.22px #333;">Debian</div>
<svg width="1024" height="611" viewBox="0 0 1024 611"><path d="M77.93 392.68 A44.849999999999994 44.849999999999994 0 1 1 89.57 450.19" fill="none" stroke="#3b86f7" stroke-width="13.9"/><path d="M88.59 449.41 A44.849999999999994 44.849999999999994 0 0 1 73.28 404.69" fill="none" stroke="#0a50dc" stroke-width="13.9"/><path d="M73.60 403.39 A44.849999999999994 44.849999999999994 0 0 1 75.68 397.25" fill="none" stroke="#ffd60a" stroke-width="13.9"/><path d="M75.96 396.60 A44.849999999999994 44.849999999999994 0 0 1 76.76 394.90" fill="none" stroke="#d4d4d4" stroke-width="13.9"/><path d="M76.83 394.76 A44.849999999999994 44.849999999999994 0 0 1 77.55 393.37" fill="none" stroke="#e4ecfb" stroke-width="13.9"/><circle cx="204.5" cy="373.10" r="4.9" fill="#3a86f8"/><circle cx="204.5" cy="393.90" r="4.9" fill="#3554c6"/><circle cx="204.5" cy="415.10" r="4.9" fill="#d4d4d4"/><circle cx="204.5" cy="435.50" r="4.9" fill="#e4ecfb"/><circle cx="204.5" cy="455.90" r="4.9" fill="#ffd60a"/><circle cx="905.4" cy="372.80" r="4.9" fill="#3a86f8"/><circle cx="905.4" cy="394.00" r="4.9" fill="#3554c6"/><circle cx="905.4" cy="415.20" r="4.9" fill="#d4d4d4"/><circle cx="905.4" cy="435.80" r="4.9" fill="#e4ecfb"/><circle cx="905.4" cy="456.00" r="4.9" fill="#ffd60a"/></svg>
<div class="b" style="left:379.80px;top:365.30px;width:12.70px;height:90.50px;background:#efefef;border-radius:0px;"></div>
<div class="t" style="left:386.2px;top:410.7px;font-size:8.5px;line-height:8.5px;color:#333;transform:translate(-50%,-50%) rotate(-90deg);">Count</div>
<svg width="1024" height="611" viewBox="0 0 1024 611"><rect x="435.90" y="409.90" width="39.10" height="44.50" fill="#3b82f6"/><rect x="435.90" y="400.90" width="39.10" height="9.00" fill="#0a50dc"/><rect x="435.90" y="400.00" width="39.10" height="0.90" fill="#d9d9d9"/><rect x="435.90" y="397.20" width="39.10" height="2.80" fill="#ffd60a"/><rect x="435.90" y="392.40" width="39.10" height="4.80" fill="#e6eefb"/><rect x="478.20" y="404.60" width="38.50" height="49.80" fill="#3b82f6"/><rect x="478.20" y="394.60" width="38.50" height="10.00" fill="#0a50dc"/><rect x="478.20" y="389.70" width="38.50" height="4.90" fill="#d9d9d9"/><rect x="478.20" y="386.30" width="38.50" height="3.40" fill="#ffd60a"/><rect x="478.20" y="380.60" width="38.50" height="5.70" fill="#e6eefb"/><rect x="519.90" y="408.20" width="38.80" height="46.20" fill="#3b82f6"/><rect x="519.90" y="399.40" width="38.80" height="8.80" fill="#0a50dc"/><rect x="519.90" y="395.30" width="38.80" height="4.10" fill="#d9d9d9"/><rect x="519.90" y="392.40" width="38.80" height="2.90" fill="#ffd60a"/><rect x="519.90" y="387.20" width="38.80" height="5.20" fill="#e6eefb"/><rect x="562.40" y="404.60" width="38.80" height="49.80" fill="#3b82f6"/><rect x="562.40" y="394.60" width="38.80" height="10.00" fill="#0a50dc"/><rect x="562.40" y="389.70" width="38.80" height="4.90" fill="#d9d9d9"/><rect x="562.40" y="386.30" width="38.80" height="3.40" fill="#ffd60a"/><rect x="562.40" y="380.60" width="38.80" height="5.70" fill="#e6eefb"/><rect x="604.90" y="412.40" width="39.40" height="42.00" fill="#3b82f6"/><rect x="604.90" y="404.00" width="39.40" height="8.40" fill="#0a50dc"/><rect x="604.90" y="399.90" width="39.40" height="4.10" fill="#d9d9d9"/><rect x="604.90" y="396.20" width="39.40" height="3.70" fill="#ffd60a"/><rect x="604.90" y="391.80" width="39.40" height="4.40" fill="#e6eefb"/><rect x="647.90" y="431.00" width="39.10" height="23.40" fill="#3b82f6"/><rect x="647.90" y="426.60" width="39.10" height="4.40" fill="#0a50dc"/><rect x="647.90" y="425.50" width="39.10" height="1.10" fill="#d9d9d9"/><rect x="647.90" y="422.00" width="39.10" height="3.50" fill="#ffd60a"/><rect x="647.90" y="420.60" width="39.10" height="1.40" fill="#e6eefb"/><rect x="690.20" y="424.20" width="38.90" height="30.20" fill="#3b82f6"/><rect x="690.20" y="418.40" width="38.90" height="5.80" fill="#0a50dc"/><rect x="690.20" y="416.50" width="38.90" height="1.90" fill="#d9d9d9"/><rect x="690.20" y="413.20" width="38.90" height="3.30" fill="#ffd60a"/><rect x="690.20" y="410.50" width="38.90" height="2.70" fill="#e6eefb"/><rect x="732.30" y="431.00" width="38.90" height="23.40" fill="#3b82f6"/><rect x="732.30" y="426.60" width="38.90" height="4.40" fill="#0a50dc"/><rect x="732.30" y="425.50" width="38.90" height="1.10" fill="#d9d9d9"/><rect x="732.30" y="422.50" width="38.90" height="3.00" fill="#ffd60a"/><rect x="732.30" y="421.20" width="38.90" height="1.30" fill="#e6eefb"/><rect x="774.50" y="422.00" width="38.80" height="32.40" fill="#3b82f6"/><rect x="774.50" y="415.70" width="38.80" height="6.30" fill="#0a50dc"/><rect x="774.50" y="413.80" width="38.80" height="1.90" fill="#d9d9d9"/><rect x="774.50" y="410.50" width="38.80" height="3.30" fill="#ffd60a"/><rect x="774.50" y="407.50" width="38.80" height="3.00" fill="#e6eefb"/><rect x="816.80" y="416.80" width="38.90" height="37.60" fill="#3b82f6"/><rect x="816.80" y="409.10" width="38.90" height="7.70" fill="#0a50dc"/><rect x="816.80" y="406.40" width="38.90" height="2.70" fill="#d9d9d9"/><rect x="816.80" y="403.70" width="38.90" height="2.70" fill="#ffd60a"/><rect x="816.80" y="400.10" width="38.90" height="3.60" fill="#e6eefb"/><path d="M427.6 366 V454.40 H869.4" fill="none" stroke="#6a6a6a" stroke-width="1"/><path d="M425.2 366.20 H427.6" stroke="#6a6a6a" stroke-width="1"/><path d="M425.2 411.30 H427.6" stroke="#6a6a6a" stroke-width="1"/><path d="M425.2 454.40 H427.6" stroke="#6a6a6a" stroke-width="1"/><path d="M513.50 454.40 V461.7" stroke="#555" stroke-width="1"/><path d="M583.30 454.40 V461.7" stroke="#555" stroke-width="1"/><path d="M653.10 454.40 V461.7" stroke="#555" stroke-width="1"/><path d="M722.90 454.40 V461.7" stroke="#555" stroke-width="1"/><path d="M792.70 454.40 V461.7" stroke="#555" stroke-width="1"/></svg>
<div class="t" style="left:405.00px;top:363.67px;font-size:7px;line-height:7px;color:#444;letter-spacing:-0.154px;transform:scaleX(0.9644);transform-origin:0 0;">6,000</div>
<div class="t" style="left:405.00px;top:409.07px;font-size:7px;line-height:7px;color:#444;letter-spacing:-0.154px;transform:scaleX(0.9644);transform-origin:0 0;">3,000</div>
<div class="t" style="left:417.91px;top:451.87px;font-size:7px;line-height:7px;color:#555;">0</div>
<div class="b" style="left:549.80px;top:466.60px;width:150.20px;height:13.30px;background:#eeeeee;border-radius:0px;"></div>
<div class="t" style="left:575.05px;top:468.34px;font-size:9.4px;line-height:9.4px;color:#333;letter-spacing:-0.207px;transform:scaleX(0.9507);transform-origin:0 0;-webkit-text-stroke:0.22px #333;">timestamp per 30 minutes</div>
<div class="t" style="left:30.25px;top:539.46px;font-size:9.5px;line-height:9.5px;color:#2e2e2e;letter-spacing:-0.209px;transform:scaleX(0.9686);transform-origin:0 0;-webkit-text-stroke:0.22px #2e2e2e;">Time</div>
<svg width="1024" height="611" viewBox="0 0 1024 611"><path d="M55.3 542.9 H61.1 L58.2 545.9 Z" fill="#3b82f6"/></svg>
<div class="t" style="left:198.50px;top:539.46px;font-size:9.5px;line-height:9.5px;color:#2e2e2e;letter-spacing:-0.082px;-webkit-text-stroke:0.22px #2e2e2e;">Agent</div>
<div class="t" style="left:267.50px;top:539.46px;font-size:9.5px;line-height:9.5px;color:#2e2e2e;letter-spacing:-0.081px;-webkit-text-stroke:0.22px #2e2e2e;">Agent name</div>
<div class="t" style="left:359.00px;top:539.46px;font-size:9.5px;line-height:9.5px;color:#2e2e2e;letter-spacing:0.072px;-webkit-text-stroke:0.22px #2e2e2e;">Techniques(s)</div>
<div class="t" style="left:465.00px;top:539.46px;font-size:9.5px;line-height:9.5px;color:#2e2e2e;letter-spacing:0.142px;-webkit-text-stroke:0.22px #2e2e2e;">Tactic(s)</div>
<div class="t" style="left:594.50px;top:539.46px;font-size:9.5px;line-height:9.5px;color:#2e2e2e;letter-spacing:0.098px;-webkit-text-stroke:0.22px #2e2e2e;">Description</div>
<div class="t" style="left:853.50px;top:539.46px;font-size:9.5px;line-height:9.5px;color:#2e2e2e;letter-spacing:-0.178px;-webkit-text-stroke:0.22px #2e2e2e;">Level</div>
<div class="t" style="left:938.50px;top:539.46px;font-size:9.5px;line-height:9.5px;color:#2e2e2e;letter-spacing:-0.209px;transform:scaleX(0.9532);transform-origin:0 0;-webkit-text-stroke:0.22px #2e2e2e;">Rule ID</div>
<div class="b" style="left:26.00px;top:555.40px;width:968.50px;height:0.90px;background:#f3f3f3;border-radius:0px;"></div>
<div class="t" style="left:29.75px;top:564.77px;font-size:11.5px;line-height:11.5px;color:#2b2b2b;letter-spacing:-0.253px;transform:scaleX(0.9137);transform-origin:0 0;-webkit-text-stroke:0.22px #2b2b2b;">&gt; Jan 22, 2024 @ 09:55:20.518</div>
<div class="t" style="left:198.00px;top:564.77px;font-size:11.5px;line-height:11.5px;color:#4a8fe0;letter-spacing:-0.253px;transform:scaleX(0.9367);transform-origin:0 0;-webkit-text-stroke:0.22px #4a8fe0;">004</div>
<div class="t" style="left:268.00px;top:564.77px;font-size:11.5px;line-height:11.5px;color:#2b2b2b;letter-spacing:-0.253px;transform:scaleX(0.9749);transform-origin:0 0;-webkit-text-stroke:0.22px #2b2b2b;">Windows</div>
<div class="t" style="left:359.00px;top:564.77px;font-size:11.5px;line-height:11.5px;color:#4a8fe0;letter-spacing:-0.253px;transform:scaleX(0.8387);transform-origin:0 0;-webkit-text-stroke:0.22px #4a8fe0;">T1218</div>
<div class="t" style="left:465.00px;top:564.77px;font-size:11.5px;line-height:11.5px;color:#2b2b2b;letter-spacing:-0.253px;transform:scaleX(0.9712);transform-origin:0 0;-webkit-text-stroke:0.22px #2b2b2b;">Defense Evasion</div>
<div class="t" style="left:594.50px;top:563.97px;font-size:11.5px;line-height:11.5px;color:#2b2b2b;letter-spacing:-0.253px;transform:scaleX(0.9669);transform-origin:0 0;-webkit-text-stroke:0.22px #2b2b2b;">Signed Script Proxy Execution: C:\\Windows....</div>
<div class="t" style="left:858.00px;top:564.77px;font-size:11.5px;line-height:11.5px;color:#2b2b2b;letter-spacing:-0.253px;transform:scaleX(0.7975);transform-origin:0 0;-webkit-text-stroke:0.22px #2b2b2b;">10</div>
<div class="t" style="left:933.50px;top:564.77px;font-size:11.5px;line-height:11.5px;color:#4a8fe0;letter-spacing:-0.253px;transform:scaleX(0.9835);transform-origin:0 0;-webkit-text-stroke:0.22px #4a8fe0;">255563</div>
</div></div></body></html>
